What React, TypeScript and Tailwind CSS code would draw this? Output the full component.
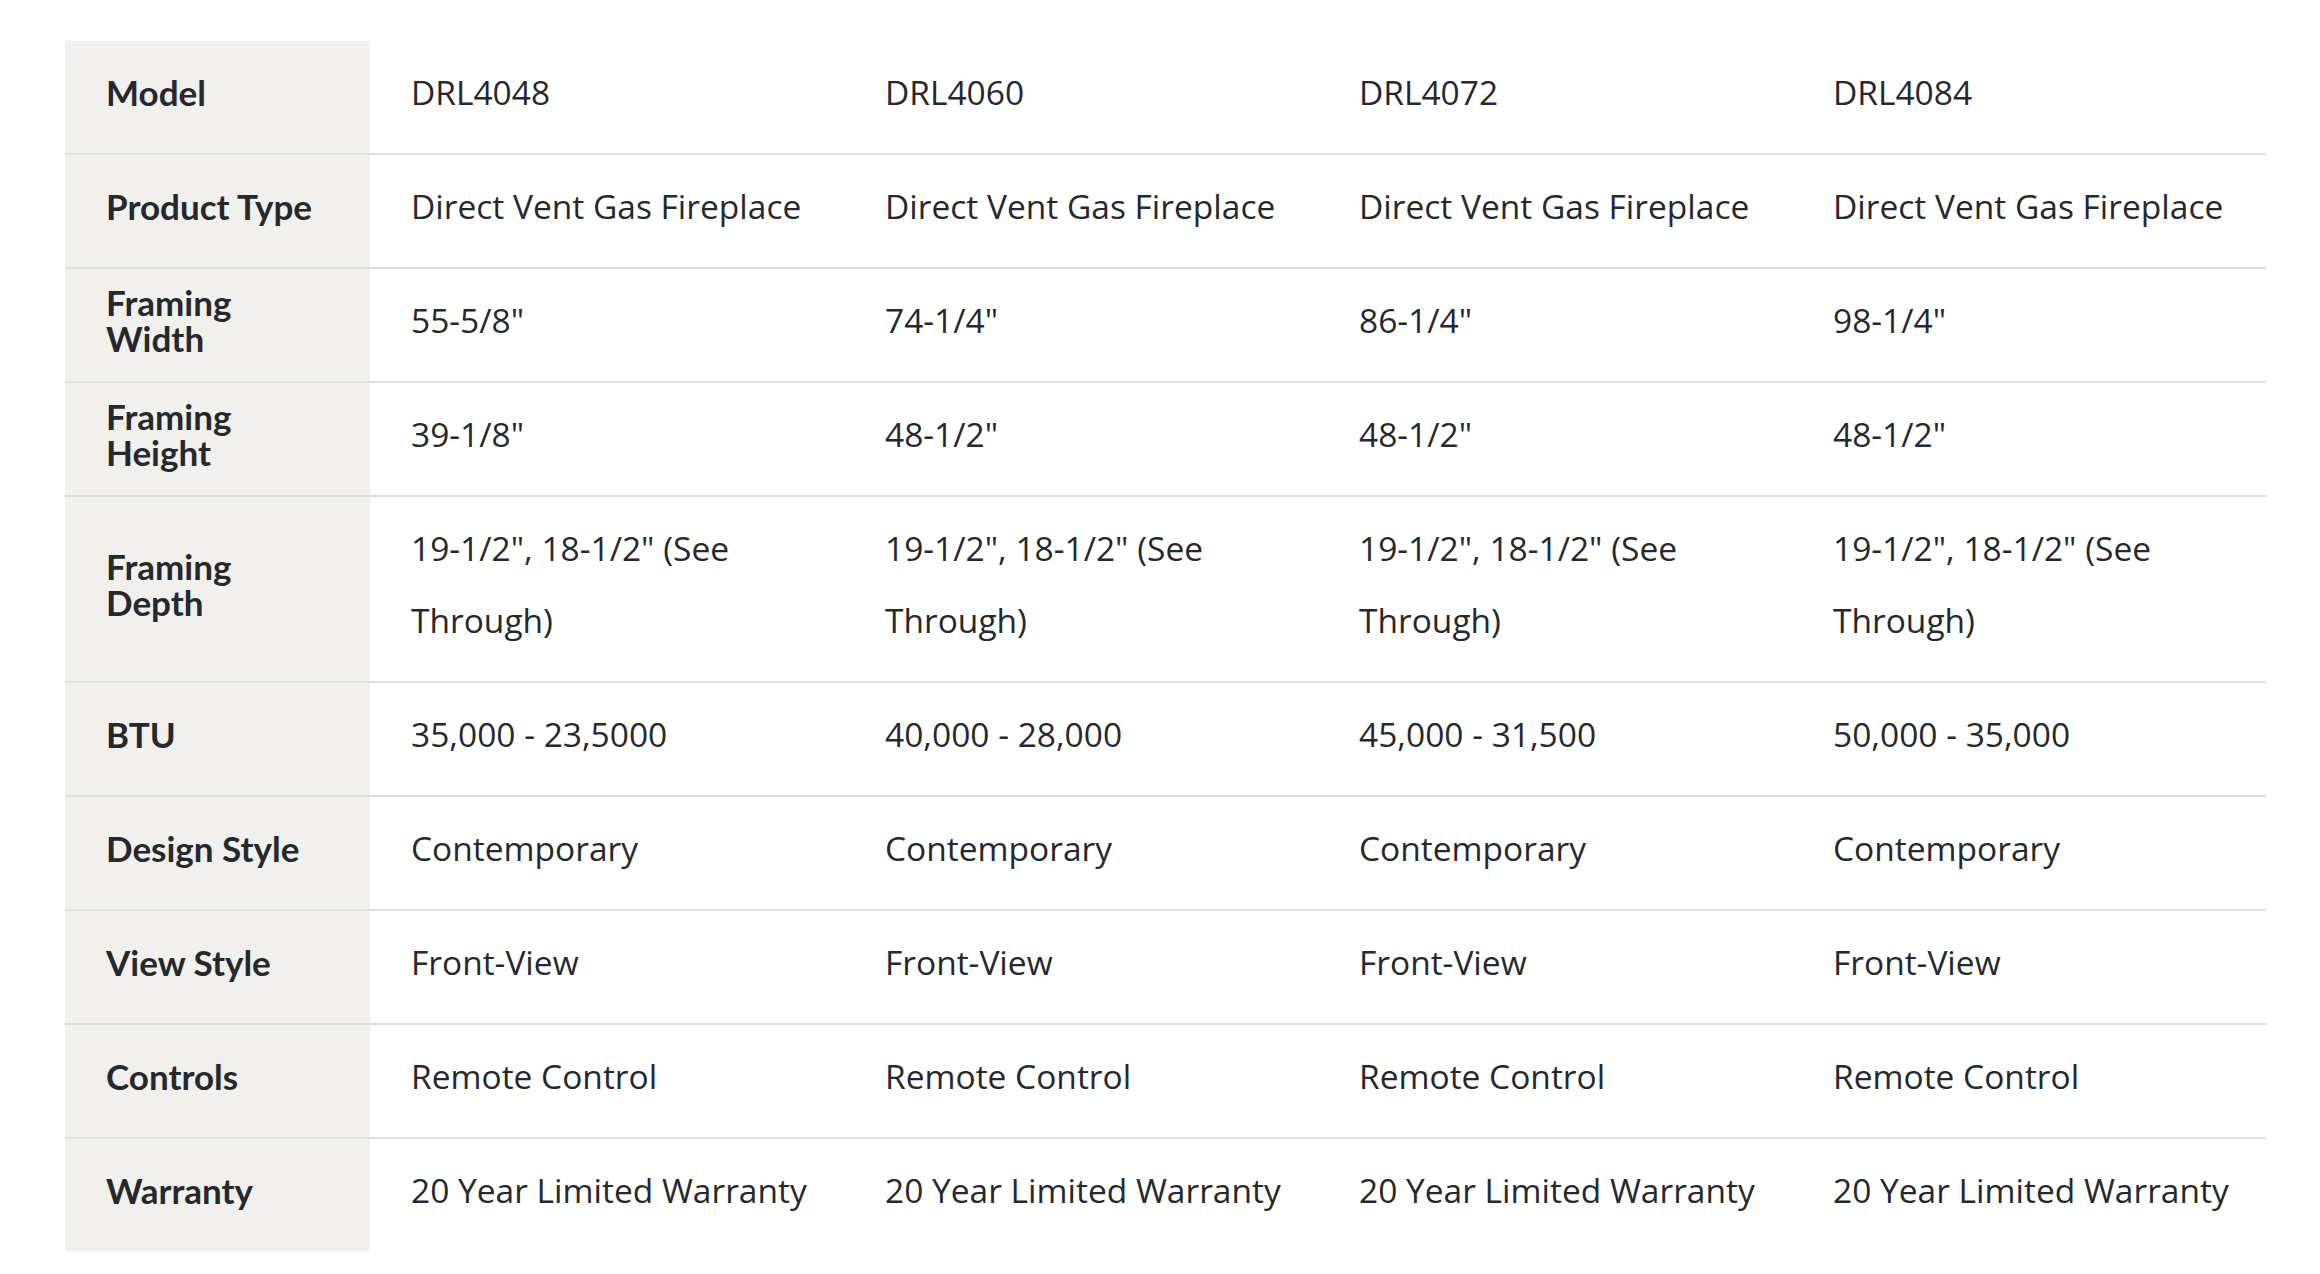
import React from 'react'

const rows: { label: string; values: string[] }[] = [
    { label: 'Model', values: ['DRL4048', 'DRL4060', 'DRL4072', 'DRL4084'] },
    { label: 'Product Type', values: Array(4).fill('Direct Vent Gas Fireplace') },
    { label: 'Framing Width', values: ['55-5/8"', '74-1/4"', '86-1/4"', '98-1/4"'] },
    { label: 'Framing Height', values: ['39-1/8"', '48-1/2"', '48-1/2"', '48-1/2"'] },
    { label: 'Framing Depth', values: Array(4).fill('19-1/2", 18-1/2" (See Through)') },
    { label: 'BTU', values: ['35,000 - 23,5000', '40,000 - 28,000', '45,000 - 31,500', '50,000 - 35,000'] },
    { label: 'Design Style', values: Array(4).fill('Contemporary') },
    { label: 'View Style', values: Array(4).fill('Front-View') },
    { label: 'Controls', values: Array(4).fill('Remote Control') },
    { label: 'Warranty', values: Array(4).fill('20 Year Limited Warranty') },
]

const App = () => {
    return (
        <div className="min-h-screen bg-white pt-[41px] pl-[65px] text-[#25292e]">
            <table className="table-fixed border-collapse w-[2201px]">
                <colgroup>
                    <col className="w-[305px]" />
                    <col className="w-[474px]" />
                    <col className="w-[474px]" />
                    <col className="w-[474px]" />
                    <col className="w-[474px]" />
                </colgroup>
                <tbody>
                    {rows.map((row, i) => (
                        <tr key={row.label} className={i > 0 ? 'border-t-2 border-[#dcdee1]' : ''}>
                            <th className="bg-[#f1f0ed] pl-[41px] pr-[40px] pt-[15px] pb-[25px] text-left align-middle font-['Lato','Liberation_Sans',sans-serif] text-[35px] leading-[36px] font-bold">
                                {row.label}
                            </th>
                            {row.values.map((v, j) => (
                                <td key={j} className="pl-[41px] pr-[14px] pt-[15px] pb-[25px] align-middle font-['Open_Sans','Liberation_Sans',sans-serif] text-[33.5px] leading-[72px]">
                                    {v}
                                </td>
                            ))}
                        </tr>
                    ))}
                </tbody>
            </table>
        </div>
    )
}

export default App
